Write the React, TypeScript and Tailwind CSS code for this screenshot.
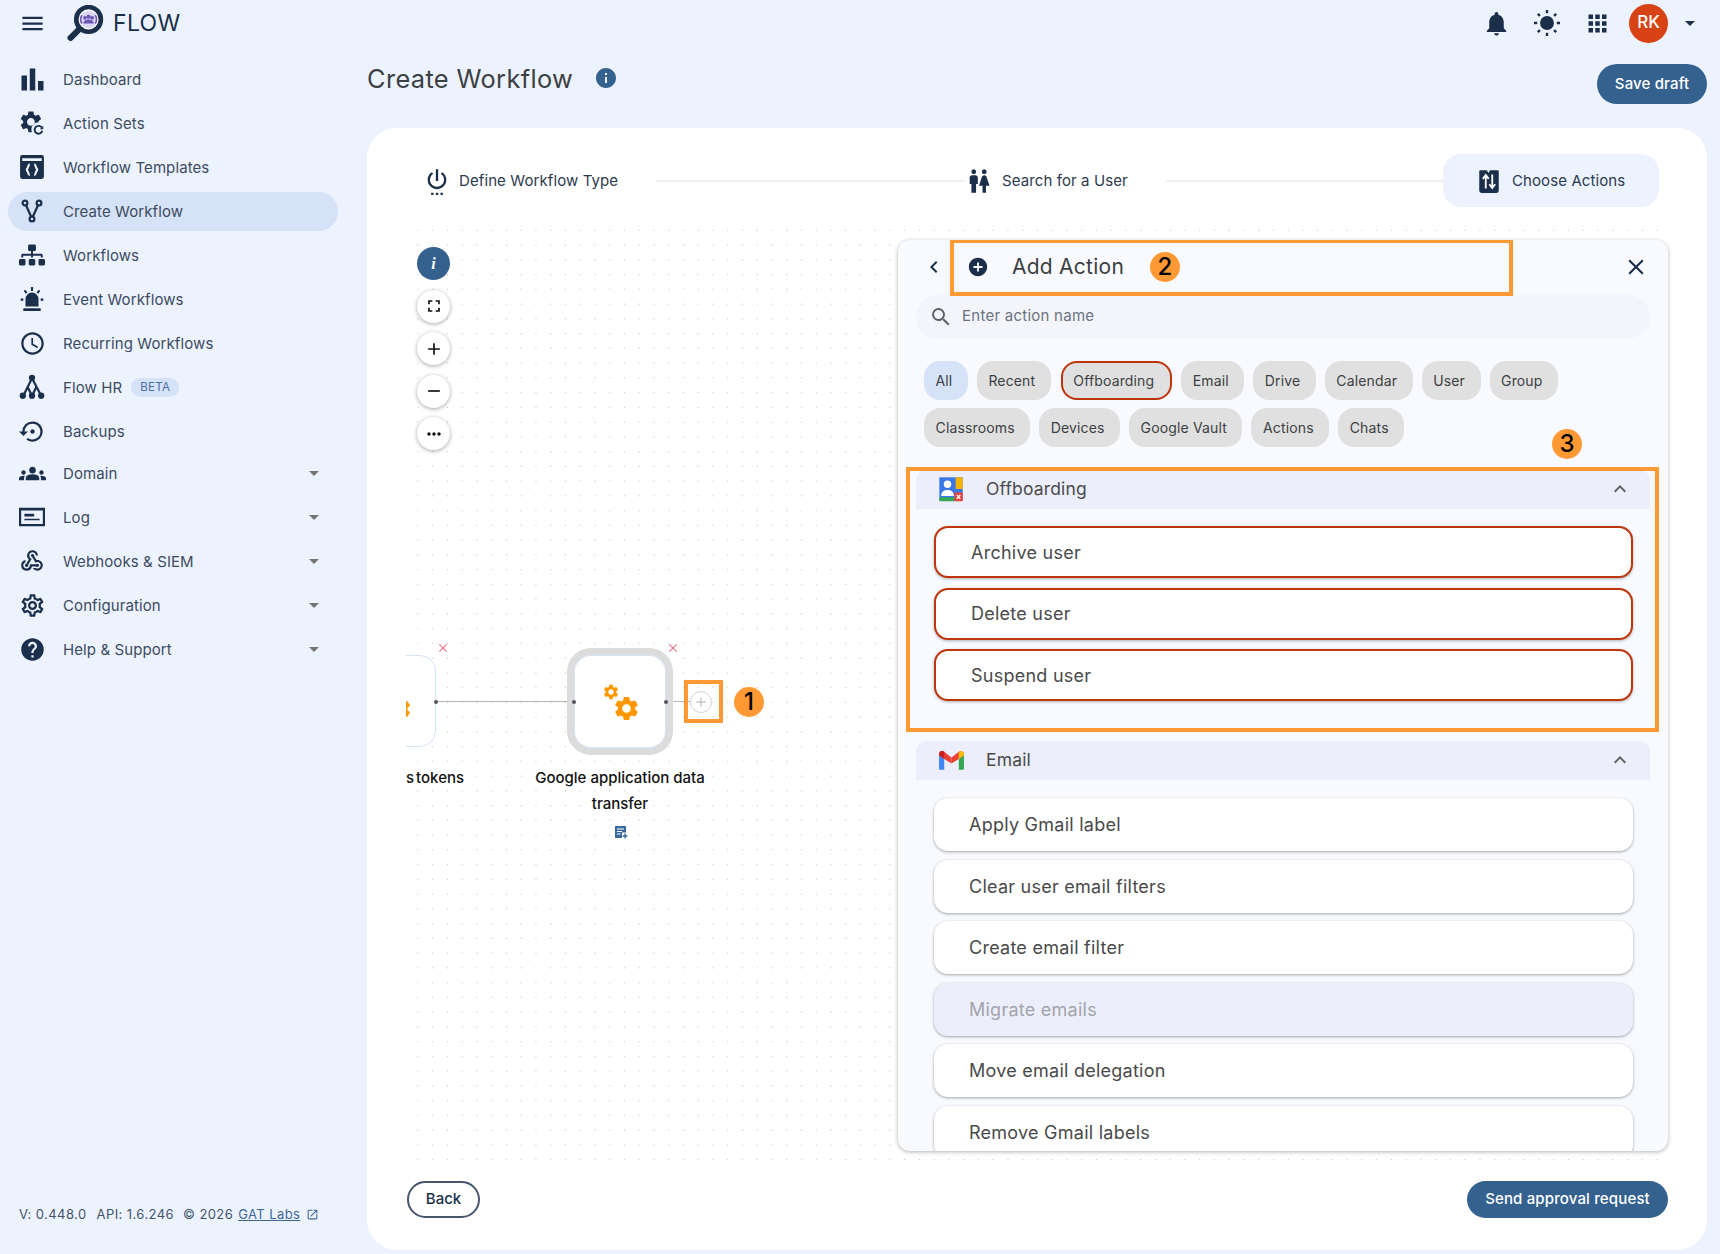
import type { ReactNode } from "react";
import {
  MdAdd,
  MdAddCircle,
  MdApps,
  MdBarChart,
  MdChevronLeft,
  MdClose,
  MdExpandLess,
  MdFullscreen,
  MdGroups,
  MdHelp,
  MdInfo,
  MdMenu,
  MdMoreHoriz,
  MdNotifications,
  MdOpenInNew,
  MdOutlineSchedule,
  MdOutlineSettings,
  MdOutlineWebhook,
  MdRemove,
  MdSearch,
  MdSettingsBackupRestore,
  MdSettingsPower,
  MdWc,
} from "react-icons/md";
import { FaSitemap } from "react-icons/fa";

const GEAR =
  "M19.14 12.94c.04-.3.06-.61.06-.94 0-.32-.02-.64-.07-.94l2.03-1.58c.18-.14.23-.41.12-.61l-1.92-3.32c-.12-.22-.37-.29-.59-.22l-2.39.96c-.5-.38-1.03-.7-1.62-.94l-.36-2.54c-.04-.24-.24-.41-.48-.41h-3.84c-.24 0-.43.17-.47.41l-.36 2.54c-.59.24-1.13.57-1.62.94l-2.39-.96c-.22-.08-.47 0-.59.22L2.74 8.87c-.12.21-.08.47.12.61l2.03 1.58c-.05.3-.09.63-.09.94s.02.64.07.94l-2.03 1.58c-.18.14-.23.41-.12.61l1.92 3.32c.12.22.37.29.59.22l2.39-.96c.5.38 1.03.7 1.62.94l.36 2.54c.05.24.24.41.48.41h3.84c.24 0 .44-.17.47-.41l.36-2.54c.59-.24 1.13-.56 1.62-.94l2.39.96c.22.08.47 0 .59-.22l1.92-3.32c.12-.22.07-.47-.12-.61l-2.01-1.58zM12 15.6c-1.98 0-3.6-1.62-3.6-3.6s1.62-3.6 3.6-3.6 3.6 1.62 3.6 3.6-1.62 3.6-3.6 3.6z";

const ActionSetsIcon = () => (
  <svg viewBox="0 0 24 24" className="h-[26px] w-[26px]" fill="currentColor">
    <path d={GEAR} fillRule="evenodd" transform="translate(-1 -1)" />
    <circle cx="18" cy="18" r="6.600" fill="#ecf3ff" />
    <path d="M21 16.200a3.600 3.600 0 1 0 .5 3" fill="none" stroke="currentColor" strokeWidth="1.800" />
    <path d="M22.400 14.600v3.200h-3.200z" />
  </svg>
);

const TemplatesIcon = () => (
  <svg viewBox="0 0 24 24" className="h-[26px] w-[26px]" fill="currentColor">
    <path d="M3 1h18a2 2 0 0 1 2 2v18a2 2 0 0 1-2 2H3a2 2 0 0 1-2-2V3a2 2 0 0 1 2-2zm0 3v2.500h18V4z" fillRule="evenodd" />
    <path
      d="M10 9.500C8 9.500 9 14 6.500 14.500 9 15 8 19.500 10 19.500M14 9.500c2 0 1 4.500 3.500 5-2.500.5-1.500 5-3.500 5"
      fill="none"
      stroke="#ecf3ff"
      strokeWidth="2"
    />
  </svg>
);

const ForkIcon = () => (
  <svg viewBox="0 0 24 24" className="h-6 w-6" fill="none" stroke="currentColor" strokeWidth="2.200">
    <circle cx="5" cy="4" r="2.400" />
    <circle cx="19" cy="4" r="2.400" />
    <circle cx="12" cy="20" r="2.400" />
    <path d="M6 6.200 11.200 17.800M18 6.200 12.800 17.800" />
  </svg>
);

const SirenIcon = () => (
  <svg viewBox="0 0 24 24" className="h-[26px] w-[26px]" fill="currentColor">
    <path d="M6 19v-7a6 6 0 0 1 12 0v7zM4 20.500h16V23H4zM11 1h2v3.500h-2zM1.500 11.500H4v2H1.500zM20 11.500h2.500v2H20zM4.300 4.700l1.500-1.300 2 2.500-1.500 1.300zM19.700 4.700l-1.500-1.300-2 2.500 1.500 1.300z" />
  </svg>
);

const TreeIcon = () => (
  <svg viewBox="0 0 24 24" className="h-[26px] w-[26px]" fill="currentColor" stroke="currentColor">
    <circle cx="12" cy="3.500" r="2.400" />
    <circle cx="3.500" cy="20" r="2.400" />
    <circle cx="12" cy="20" r="2.400" />
    <circle cx="20.500" cy="20" r="2.400" />
    <path d="M12 4 4 20M12 4l8.500 16M8 12l4 8M16 12l-4 8" fill="none" strokeWidth="2" />
  </svg>
);

const LogIcon = () => (
  <svg viewBox="0 0 24 24" className="h-[26px] w-[26px]" fill="currentColor">
    <path d="M0 3.500h24v17H0zm2 2.500v12.500h20V6z" fillRule="evenodd" />
    <path d="M5 9h9v2.500H5zM5 13.500h14V15H5z" />
  </svg>
);

const SunIcon = () => (
  <svg viewBox="0 0 24 24" className="h-[26px] w-[26px]" fill="#1b2f4b">
    <circle cx="12" cy="12" r="6.400" />
    <path
      d="M12 0v3M12 21v3M0 12h3M21 12h3M3.500 3.500l2 2M18.500 18.500l2 2M3.500 20.500l2-2M18.500 5.500l2-2"
      stroke="#1b2f4b"
      strokeWidth="2.200"
    />
  </svg>
);

const ChooseActionsIcon = () => (
  <svg viewBox="0 0 24 24" className="h-[26px] w-[26px]">
    <path d="M4 2h6l1.500 2.500L13 2h7a1 1 0 0 1 1 1v18a2 2 0 0 1-2 2H5a2 2 0 0 1-2-2V3a1 1 0 0 1 1-1z" fill="#1b2f4b" />
    <path
      d="M9 19V7M6.300 10 9 6.500 11.700 10M15 6v12M12.300 15l2.700 3.500 2.700-3.500"
      fill="none"
      stroke="#fff"
      strokeWidth="1.700"
    />
  </svg>
);

const LogoIcon = () => (
  <svg viewBox="0 0 36 36" className="h-[37px] w-[37px]">
    <path d="M12.500 23 3.500 32" stroke="#1b2f4b" strokeWidth="6" strokeLinecap="round" />
    <circle cx="21" cy="14" r="12" fill="#fff" stroke="#1b2f4b" strokeWidth="4.500" />
    <circle cx="21" cy="14" r="8.500" fill="#d9d6f2" />
    <path d="M14.500 10a7.500 7.500 0 0 0 0 8M27.500 10a7.500 7.500 0 0 1 0 8" fill="none" stroke="#6a56b5" strokeWidth="1.500" />
    <circle cx="17.500" cy="12.500" r="1.800" fill="#6a56b5" />
    <circle cx="24.500" cy="12.500" r="1.800" fill="#6a56b5" />
    <circle cx="21" cy="11.500" r="2.100" fill="#6a56b5" />
    <path d="M16 18a5 4 0 0 1 10 0z" fill="#6a56b5" />
  </svg>
);

const OffboardingIcon = () => (
  <svg viewBox="0 0 24 24" className="-mt-[2px] h-[28px] w-[28px]">
    <path d="M2 2h20v20H2z" fill="#3b78e7" />
    <path d="M16 2h5a1 1 0 0 1 1 1v9h-6z" fill="#f4b400" />
    <path d="M2 19h13v3.500H3a1 1 0 0 1-1-1z" fill="#34a853" />
    <path d="M15 15h7v6.500a1 1 0 0 1-1 1h-6z" fill="#ea4335" />
    <circle cx="9" cy="8" r="3.200" fill="#fff" />
    <path d="M3.500 18c0-3.500 2.500-5.200 5.500-5.200s5.500 1.700 5.500 5.200z" fill="#fff" />
    <path d="m17 17 3 3.500m0-3.500-3 3.500" stroke="#fff" strokeWidth="1.200" />
  </svg>
);

const GmailIcon = () => (
  <svg viewBox="0 0 26 20" className="h-[21px] w-[27px]">
    <path d="M1 4v14a1 1 0 0 0 1 1h4V9z" fill="#4285f4" />
    <path d="M25 4v14a1 1 0 0 1-1 1h-4V9z" fill="#34a853" />
    <path d="M1 4c0-3 3-4 5-2.500L13 7v6L6 8.500 1 5z" fill="#ea4335" />
    <path d="M25 4c0-3-3-4-5-2.500L13 7v6l7-4.500 5-3.500z" fill="#ea4335" />
    <path d="M20 1.500C22 0 25 1 25 4v1l-5 3.500z" fill="#fbbc04" />
    <path d="M6 1.500C4 0 1 1 1 4v1l5 3.500z" fill="#c5221f" />
  </svg>
);

const NoteAddIcon = () => (
  <svg viewBox="0 0 14 14" className="absolute top-[602px] left-[208px] h-[14px] w-[14px]">
    <path d="M1 1h11v6.500H8V13H1z" fill="#3a6a9b" />
    <path d="M3 4h7M3 6.500h5M3 9h3.500" stroke="#fff" strokeWidth="1" />
    <path d="M11 8.500v5M8.500 11h5" stroke="#3a6a9b" strokeWidth="1.400" />
  </svg>
);

const Gear = ({ className }: { className: string }) => (
  <svg viewBox="0 0 24 24" className={className} fill="#ff9800">
    <path d={GEAR} fillRule="evenodd" />
  </svg>
);

type NavEntry = { label: string; icon: ReactNode; active?: boolean; beta?: boolean; caret?: boolean };

const iconClass = "h-[26px] w-[26px]";

const navTop: NavEntry[] = [
  { label: "Dashboard", icon: <MdBarChart className="h-[33px] w-[33px]" /> },
  { label: "Action Sets", icon: <ActionSetsIcon /> },
  { label: "Workflow Templates", icon: <TemplatesIcon /> },
  { label: "Create Workflow", icon: <ForkIcon />, active: true },
  { label: "Workflows", icon: <FaSitemap className={iconClass} /> },
  { label: "Event Workflows", icon: <SirenIcon /> },
  { label: "Recurring Workflows", icon: <MdOutlineSchedule className="h-[27px] w-[27px]" /> },
  { label: "Flow HR", icon: <TreeIcon />, beta: true },
  { label: "Backups", icon: <MdSettingsBackupRestore className="h-[27px] w-[27px]" /> },
];

const navBottom: NavEntry[] = [
  { label: "Domain", icon: <MdGroups className="h-[27px] w-[27px]" />, caret: true },
  { label: "Log", icon: <LogIcon />, caret: true },
  { label: "Webhooks & SIEM", icon: <MdOutlineWebhook className={iconClass} />, caret: true },
  { label: "Configuration", icon: <MdOutlineSettings className="h-[27px] w-[27px]" />, caret: true },
  { label: "Help & Support", icon: <MdHelp className="h-[27px] w-[27px]" />, caret: true },
];

const NavItem = ({ item }: { item: NavEntry }) => (
  <div className="flex h-11 items-center">
    <div
      className={`ml-2 flex h-[39px] w-[330px] items-center rounded-full pr-[19px] ${
        item.active ? "bg-[#d6e2f8]" : ""
      }`}
    >
      <span className="flex w-[48px] justify-center text-[#1b2f4b]">{item.icon}</span>
      <span className="ml-[7px] text-[15px] leading-none tracking-[0.1px] text-[#3d4b60]">{item.label}</span>
      {item.beta && (
        <span className="ml-[9px] rounded-full bg-[#d6e2f8] px-[9px] py-[3px] text-[11.500px] leading-[13px] tracking-[0.3px] text-[#4a6f9c]">
          BETA
        </span>
      )}
      {item.caret && (
        <span className="ml-auto h-0 w-0 border-x-[5px] border-t-[5px] border-x-transparent border-t-[#757575]" />
      )}
    </div>
  </div>
);

const Sidebar = () => (
  <aside className="flex h-full w-[367px] shrink-0 flex-col">
    <div className="flex h-[46px] items-center pl-[19px]">
      <MdMenu className="h-[27px] w-[27px] text-[#1b2f4b]" />
      <span className="ml-[21px]">
        <LogoIcon />
      </span>
      <span className="ml-[9px] text-[23px] leading-none tracking-[0.3px] text-[#1b2f4b]">FLOW</span>
    </div>
    <nav className="mt-[11px]">
      {navTop.map((item) => (
        <NavItem key={item.label} item={item} />
      ))}
      <div className="-mt-[2px]">
        {navBottom.map((item) => (
          <NavItem key={item.label} item={item} />
        ))}
      </div>
    </nav>
    <div className="mt-auto mb-[33px] flex items-center pl-[19px] text-[13px] leading-none tracking-[0.42px] text-[#44536a]">
      <span>V: 0.448.0</span>
      <span className="ml-[10px]">API: 1.6.246</span>
      <span className="ml-[9px]">© 2026</span>
      <span className="ml-[5px] text-[#3f6794] underline">GAT Labs</span>
      <MdOpenInNew className="ml-[6px] h-[13px] w-[13px] text-[#3f6794]" />
    </div>
  </aside>
);

const chipRows = [
  ["All", "Recent", "Offboarding", "Email", "Drive", "Calendar", "User", "Group"],
  ["Classrooms", "Devices", "Google Vault", "Actions", "Chats"],
];

const Chip = ({ label }: { label: string }) => (
  <span
    className={`flex h-[39px] items-center rounded-[16px] text-[14px] tracking-[0.15px] text-[#3c4043] ${
      label === "All" ? "bg-[#d6e2f8]" : "bg-[#e0e0e0]"
    } ${
      label === "Offboarding"
        ? "ml-[1px] pr-[18px] pl-[12.500px] ring-2 ring-[#bf360c] ring-inset"
        : "pr-[15.500px] pl-[11.500px]"
    }`}
  >
    {label}
  </span>
);

const Badge = ({ n, className }: { n: number; className: string }) => (
  <span
    className={`absolute flex h-[30px] w-[30px] items-center justify-center rounded-full bg-[#ff9933] text-[24px] leading-none font-medium text-black ${className}`}
  >
    {n}
  </span>
);

const SectionHeader = ({ label, icon, className }: { label: string; icon: ReactNode; className: string }) => (
  <div className={`mx-[18px] flex h-[39px] items-center rounded-t-[10px] bg-[#eceefb] ${className}`}>
    <span className="flex w-[70px] justify-center">{icon}</span>
    <span className="text-[17.500px] tracking-[0.15px] text-[#4a4a4a]">{label}</span>
    <MdExpandLess className="mr-[18px] mb-[1px] ml-auto h-[24px] w-[24px] text-[#616161]" />
  </div>
);

const ActionPanel = () => (
  <div className="absolute top-[17px] -right-[8px] flex h-[911px] w-[770px] flex-col overflow-hidden rounded-[12px] bg-[#f9faff] shadow-[0_1px_4px_rgba(0,0,0,0.3)]">
    <div className="flex h-[55px] shrink-0 items-center pr-[19px] pb-[1px] pl-[24px] text-[#1b2f4b]">
      <MdChevronLeft className="h-[24px] w-[24px]" />
      <MdAddCircle className="ml-[21px] h-[22px] w-[22px]" />
      <span className="ml-[23px] text-[21px] tracking-[0.25px] text-[#3c4043]">Add Action</span>
      <MdClose className="ml-auto h-[26px] w-[26px]" />
    </div>
    <div className="mx-[18px] flex h-[44px] shrink-0 items-center rounded-full bg-[#f3f5fb] pb-[1px] pl-[13px]">
      <MdSearch className="h-[24px] w-[24px] text-[#5f6368]" />
      <span className="ml-[9px] text-[15px] tracking-[0.25px] text-[#6b7280]">Enter action name</span>
    </div>
    <div className="mt-[22px] flex shrink-0 flex-col gap-y-[8px] pl-[26px]">
      {chipRows.map((row) => (
        <div key={row[0]} className="flex gap-x-[9px]">
          {row.map((c) => (
            <Chip key={c} label={c} />
          ))}
        </div>
      ))}
    </div>
    <SectionHeader label="Offboarding" icon={<OffboardingIcon />} className="mt-[23px] shrink-0" />
    <div className="mt-[17px] flex shrink-0 flex-col gap-y-[9.500px] pr-[35px] pl-[36px]">
      {["Archive user", "Delete user", "Suspend user"].map((a) => (
        <div
          key={a}
          className="flex h-[52px] items-center rounded-[14px] border-2 border-[#bf360c] bg-white pl-[35px] text-[18px] tracking-[0.25px] text-[#4a4a4a] shadow-[0_1px_3px_rgba(0,0,0,0.3)]"
        >
          {a}
        </div>
      ))}
    </div>
    <SectionHeader label="Email" icon={<GmailIcon />} className="mt-[40px] shrink-0" />
    <div className="mt-[18px] flex flex-col gap-y-[8.500px] pr-[35px] pl-[36px]">
      {[
        "Apply Gmail label",
        "Clear user email filters",
        "Create email filter",
        "Migrate emails",
        "Move email delegation",
        "Remove Gmail labels",
      ].map((a) => (
        <div
          key={a}
          className={`flex h-[53px] shrink-0 items-center rounded-[14px] pl-[35px] text-[18px] tracking-[0.25px] shadow-[0_1px_3px_rgba(0,0,0,0.35)] ${
            a === "Migrate emails" ? "bg-[#eceefb] text-[#a3a3ab]" : "bg-white text-[#4a4a4a]"
          }`}
        >
          {a}
        </div>
      ))}
    </div>
    <div className="absolute top-[-1px] left-[52px] h-[57px] w-[563px] border-4 border-[#ff9933]" />
    <Badge n={2} className="top-[12px] left-[252px]" />
    <Badge n={3} className="top-[189px] left-[654px]" />
    <div className="absolute top-[227px] left-[8px] h-[265px] w-[753px] border-4 border-[#ff9933]" />
  </div>
);

const zoomButton =
  "flex h-[33px] w-[33px] items-center justify-center rounded-full bg-white text-[#111] shadow-[0_1px_4px_rgba(0,0,0,0.35)]";

const Canvas = () => (
  <div className="relative mt-[16px] ml-[39px] h-[942px] w-[1254px]">
    <div className="relative h-full w-full overflow-hidden bg-[radial-gradient(circle,#c4c4c4_0.7px,transparent_1px)] bg-[size:14.75px_14.75px] bg-[position:4.600px_0]">
      {/* zoom controls */}
      <div className="absolute top-[24px] left-[11px] flex flex-col gap-y-[9.500px]">
        <span className="flex h-[33px] w-[33px] items-center justify-center rounded-full bg-[#35618f] font-['Liberation_Serif',serif] text-[16px] font-bold text-white italic">
          i
        </span>
        <span className={zoomButton}>
          <MdFullscreen className="h-[20px] w-[20px]" />
        </span>
        <span className={zoomButton}>
          <MdAdd className="h-[20px] w-[20px]" />
        </span>
        <span className={zoomButton}>
          <MdRemove className="h-[20px] w-[20px]" />
        </span>
        <span className={zoomButton}>
          <MdMoreHoriz className="h-[20px] w-[20px]" />
        </span>
      </div>

      {/* nodes */}
      <div className="absolute top-[478px] left-[30px] h-[1px] w-[138px] bg-[#b5b5b5]" />
      <div className="absolute top-[478px] left-[260px] h-[1px] w-[24px] bg-[#b5b5b5]" />
      <div className="absolute top-[432px] -left-[60px] h-[92px] w-[90px] rounded-[16px] border border-[#d6e2f8] bg-white" />
      <Gear className="absolute top-[472px] -left-[21px] h-[28px] w-[28px]" />
      <div className="absolute top-[425px] left-[161px] flex h-[107px] w-[106px] items-center justify-center rounded-[24px] border-[7px] border-[#dcdcdc] bg-white shadow-[inset_0_0_0_1px_#d6e2f8]">
        <Gear className="absolute top-[28px] left-[28px] h-[18px] w-[18px]" />
        <Gear className="absolute top-[39px] left-[38px] h-[29px] w-[29px]" />
      </div>
      <span className="absolute top-[477px] left-[28px] h-[4px] w-[4px] rounded-full bg-[#555]" />
      <span className="absolute top-[477px] left-[166px] h-[4px] w-[4px] rounded-full bg-[#555]" />
      <span className="absolute top-[477px] left-[258px] h-[4px] w-[4px] rounded-full bg-[#555]" />
      <span className="absolute top-[468px] left-[284px] flex h-[22px] w-[22px] items-center justify-center rounded-full border border-[#d4d4d4] bg-white">
        <MdAdd className="h-[16px] w-[16px] text-[#c4c4c4]" />
      </span>
      <MdClose className="absolute top-[418px] left-[30px] h-[14px] w-[14px] text-[#e57383]" />
      <MdClose className="absolute top-[418px] left-[260px] h-[14px] w-[14px] text-[#e57383]" />
      <div className="absolute top-[457px] left-[278px] h-[43px] w-[39px] border-4 border-[#ff9933]" />
      <Badge n={1} className="top-[464px] left-[328px]" />

      <span className="absolute top-[544px] left-0 text-[15px] leading-[22px] font-medium [word-spacing:-2px] whitespace-nowrap text-[#111]">
        s tokens
      </span>
      <div className="absolute top-[542px] left-[114px] w-[200px] text-center text-[15px] leading-[26px] font-medium text-[#111]">
        Google application data
        <br />
        transfer
      </div>
      <NoteAddIcon />
    </div>
    <ActionPanel />
  </div>
);

const Stepper = () => (
  <div className="flex h-[53px] items-center pl-[56px] text-[15px] tracking-[0.1px] whitespace-nowrap text-[#2c3a4e]">
    <MdSettingsPower className="h-[28px] w-[28px] shrink-0 text-[#1b2f4b]" />
    <span className="ml-[8px] w-[159px] pt-[1px]">Define Workflow Type</span>
    <span className="ml-[38px] h-[2px] w-[309px] shrink-0 bg-[#efefef]" />
    <MdWc className="h-[28px] w-[28px] shrink-0 text-[#1b2f4b]" />
    <span className="ml-[9px] w-[126px] pt-[1px]">Search for a User</span>
    <span className="ml-[38px] h-[2px] w-[277px] shrink-0 bg-[#efefef]" />
    <div className="flex h-[53px] w-[216px] shrink-0 items-center rounded-[18px] bg-[#ecf3ff] pl-[33px]">
      <ChooseActionsIcon />
      <span className="ml-[10px] pt-[1px]">Choose Actions</span>
    </div>
  </div>
);

const Main = () => (
  <main className="flex h-full w-[1340px] shrink-0 flex-col">
    <div className="flex h-[46px] items-center justify-end pr-[12px]">
      <MdNotifications className="h-[29px] w-[29px] text-[#1b2f4b]" />
      <span className="ml-[23px]">
        <SunIcon />
      </span>
      <MdApps className="ml-[24px] h-[27px] w-[27px] text-[#1b2f4b]" />
      <span className="ml-[18px] flex h-[39px] w-[39px] items-center justify-center rounded-full bg-[#d84315] text-[17px] font-medium text-white">
        RK
      </span>
      <span className="ml-[17px] h-0 w-0 border-x-[5px] border-t-[5px] border-x-transparent border-t-[#1b2f4b]" />
    </div>
    <div className="flex h-[82px] items-start">
      <h1 className="mt-[16px] text-[25.400px] leading-[34px] tracking-[0.35px] text-[#3c4043]">Create Workflow</h1>
      <MdInfo className="mt-[20px] ml-[21px] h-[24px] w-[24px] text-[#35618f]" />
      <span className="mt-[18px] ml-auto flex h-[40px] w-[110px] items-center justify-center rounded-full bg-[#35618f] text-[15px] font-medium tracking-[0.15px] text-white">
        Save draft
      </span>
    </div>
    <section className="flex h-[1122px] flex-col rounded-[30px] bg-white pt-[26px]">
      <Stepper />
      <Canvas />
      <div className="mt-[16px] flex items-start justify-between pr-[39px] pl-[40px]">
        <span className="flex h-[37px] w-[73px] items-center justify-center rounded-full border-2 border-[#46566c] text-[15px] font-medium text-[#1b2f4b]">
          Back
        </span>
        <span className="flex h-[37px] w-[201px] items-center justify-center rounded-full bg-[#35618f] text-[15px] font-medium tracking-[0.15px] text-white">
          Send approval request
        </span>
      </div>
    </section>
  </main>
);

export default function App() {
  return (
    <div className="flex h-[1254px] w-[1720px] overflow-hidden bg-[#ecf3ff] font-['Inter',sans-serif]">
      <Sidebar />
      <Main />
    </div>
  );
}
